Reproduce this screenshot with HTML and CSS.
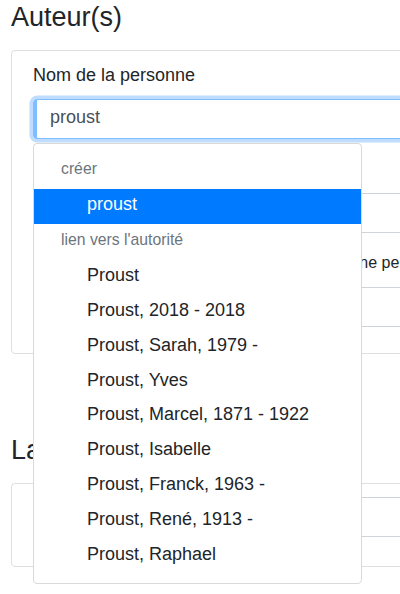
FILE: index.html
```html
<!DOCTYPE html>
<html lang="fr">
<head>
<meta charset="utf-8">
<title>Auteur(s)</title>
<link rel="stylesheet" href="styles.css">
</head>
<body>
<div class="page">
  <section class="section">
    <h4 class="section-title">Auteur(s)</h4>
    <div class="card">
      <div class="card-body">
        <label class="form-label" for="nom">Nom de la personne</label>
        <div class="autocomplete">
          <input id="nom" class="form-input is-focused" type="text" value="proust">
          <div class="dropdown-menu">
            <div class="dropdown-header">créer</div>
            <div class="dropdown-item active">proust</div>
            <div class="dropdown-header">lien vers l'autorité</div>
            <div class="dropdown-item">Proust</div>
            <div class="dropdown-item">Proust, 2018 - 2018</div>
            <div class="dropdown-item">Proust, Sarah, 1979 -</div>
            <div class="dropdown-item">Proust, Yves</div>
            <div class="dropdown-item">Proust, Marcel, 1871 - 1922</div>
            <div class="dropdown-item">Proust, Isabelle</div>
            <div class="dropdown-item">Proust, Franck, 1963 -</div>
            <div class="dropdown-item">Proust, Rene&#769;, 1913 -</div>
            <div class="dropdown-item">Proust, Raphael</div>
          </div>
        </div>
        <input class="form-input is-valid spaced" type="text" value="">
        <p class="help-text">Si l'auteur n'apparaît pas dans la liste, créez une personne</p>
        <input class="form-input is-valid" type="text" value="">
      </div>
    </div>
  </section>
  <section class="section second">
    <h4 class="section-title">Langue(s)</h4>
    <div class="card">
      <div class="card-body small">
        <input class="form-input" type="text" value="">
      </div>
    </div>
  </section>
</div>
</body>
</html>
```
FILE: styles.css
```css
html {
  overflow: hidden;
}
body {
  margin: 0;
  padding: 0;
  min-height: 594px;
  background: #fff;
  font-family: "Liberation Sans", Arial, Helvetica, sans-serif;
  font-size: 18px;
  line-height: 1.5;
  color: #212529;
}
.page {
  width: 700px;
  min-height: 593px;
  padding: 1px 0 0 11px;
}
.section-title {
  margin: 0 0 16.5px;
  font-size: 27px;
  font-weight: 400;
  line-height: 1.2;
  color: #212529;
}
.second {
  margin-top: 80.4px;
}
.card {
  border: 1px solid rgba(0, 0, 0, 0.125);
  border-radius: 4.5px;
  background: #fff;
}
.card-body {
  padding: 11px 20px 26px 21px;
  display: flex;
  flex-direction: column;
}
.card-body.small {
  padding: 13px 20px 28.7px 21px;
}
.form-label {
  display: block;
  line-height: 27px;
  margin-bottom: 10px;
}
.autocomplete {
  position: relative;
}
.form-input {
  box-sizing: border-box;
  display: block;
  width: 100%;
  height: 40px;
  margin: 0;
  padding: 4px 13px 7px;
  font-family: inherit;
  font-size: 18px;
  line-height: 27px;
  color: #495057;
  background: #fff;
  border: 1px solid #ced4da;
  border-left-width: 4px;
  border-radius: 4.5px;
  outline: none;
}
.form-input.is-focused {
  border-color: #80bdff;
  box-shadow: 0 0 0 3.6px rgba(0, 123, 255, 0.25);
}
.form-input.is-valid {
  border-left-color: #28a745;
}
.form-input.spaced {
  margin-top: 54px;
}
.help-text {
  margin: 17.75px 0 12px;
  font-size: 16px;
  line-height: 24px;
  color: #212529;
  white-space: nowrap;
}
.dropdown-menu {
  position: absolute;
  top: 44px;
  left: 0;
  width: 329px;
  box-sizing: border-box;
  z-index: 10;
  padding: 9px 0 10.3px;
  background: #fff;
  border: 1px solid rgba(0, 0, 0, 0.15);
  border-radius: 4.5px;
}
.dropdown-header {
  padding: 4.5px 27px 7.9px;
  font-size: 15.75px;
  line-height: 23.6px;
  color: #6c757d;
  white-space: nowrap;
}
.dropdown-item {
  padding: 2.5px 27px 5.3px 53px;
  line-height: 27px;
  color: #212529;
  white-space: nowrap;
}
.dropdown-item.active {
  background: #007bff;
  color: #fff;
}
```
